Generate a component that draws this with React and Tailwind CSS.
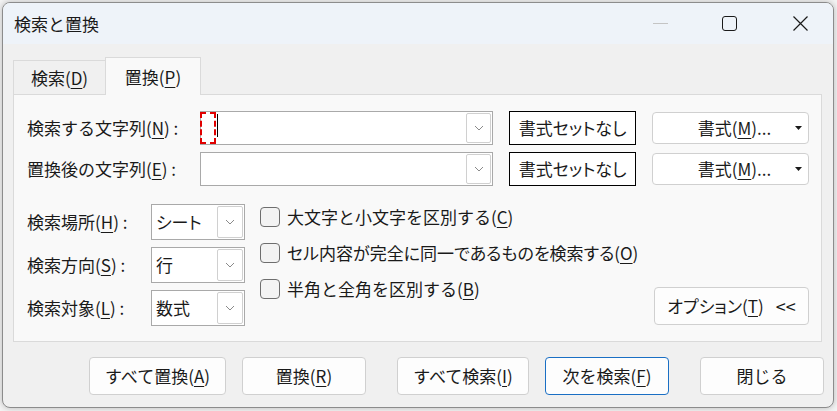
import React from "react";

const font = "font-['Noto_Sans_CJK_JP',sans-serif]";
const palt = "[font-feature-settings:'palt']";

const Key = ({ k }) => (
  <>
    (<u className="underline underline-offset-[3px] decoration-1">{k}</u>)
  </>
);

const Chevron = () => (
  <svg width="10" height="6" viewBox="0 0 10 6" fill="none">
    <path d="M1 1l4 4 4-4" stroke="#8a8a8a" strokeWidth="1" />
  </svg>
);

const Combo = ({ focus }) => (
  <div className="relative flex h-[34px] w-[293px] items-stretch border border-[#a9a9a9] bg-white">
    {focus && (
      <>
        <div className="ml-[-1px] h-[32px] w-[16px] border-2 border-dashed border-[#e00000]" />
        <div className="ml-[1px] mt-[2px] h-[23px] w-[1px] bg-black" />
      </>
    )}
    <div className="ml-auto mr-[1px] my-[1px] flex w-[25px] items-center justify-center rounded-[2px] border border-[#d0d0d0] bg-white">
      <Chevron />
    </div>
  </div>
);

const Select = ({ value }) => (
  <div className="flex h-[36px] w-[94px] items-stretch border border-[#a9a9a9] bg-white">
    <span className={"flex flex-1 items-center pl-[4px] text-[17px] text-[#1a1a1a] " + palt}>{value}</span>
    <div className="mr-[1px] my-[1px] flex w-[26px] items-center justify-center rounded-[2px] border border-[#d0d0d0] bg-white">
      <Chevron />
    </div>
  </div>
);

const Btn = ({ w, children, primary }) => (
  <button
    className={
      "flex h-[38px] items-center justify-center rounded-[4px] border bg-[#fdfdfd] text-[17px] text-[#1a1a1a] " +
      (primary ? "border-[#1a6fc4]" : "border-[#d0d0d0]")
    }
    style={{ width: w }}
  >
    {children}
  </button>
);

const FormatRow = ({ label, focus }) => (
  <div className="flex h-[34px] items-center">
    <span className="w-[173px] text-[17px] text-[#1a1a1a]">{label}</span>
    <Combo focus={focus} />
    <div className={"ml-[16px] flex h-[34px] w-[127px] items-center justify-center border border-black bg-white text-[17px] text-[#1a1a1a] " + palt}>
      書式セットなし
    </div>
    <div className="relative ml-[16px] flex h-[32px] w-[157px] items-center justify-center rounded-[4px] border border-[#d0d0d0] bg-white text-[17px] text-[#1a1a1a]">
      <span className="ml-[8px]">
        書式<Key k="M" />...
      </span>
      <svg className="absolute right-[6px] top-[13px]" width="7" height="4" viewBox="0 0 7 4">
        <path d="M0 0h7L3.5 4z" fill="#1a1a1a" />
      </svg>
    </div>
  </div>
);

const Check = ({ children, tight }) => (
  <div className="flex h-[22px] items-center">
    <div className="h-[20px] w-[20px] rounded-[4px] border border-[#6e6e6e] bg-[#f3f3f3]" />
    <span className={"ml-[7px] text-[17px] text-[#1a1a1a] " + (tight ? palt : "")}>{children}</span>
  </div>
);

export default function App() {
  return (
    <div className={"h-[411px] w-[837px] overflow-hidden bg-[#f4f4f4] p-[2px] " + font}>
      <div className="flex h-[406px] w-[832px] flex-col overflow-hidden rounded-[8px] border border-[#8c8c8c] bg-[#f0f0f0] shadow-[0_0_6px_rgba(0,0,0,0.25)]">
        {/* title bar */}
        <div className="flex h-[41px] items-center bg-[#eef3f9]">
          <span className="pl-[11px] text-[17px] text-[#1a1a1a]">検索と置換</span>
          <div className="ml-auto flex items-center">
            <div className="h-[1px] w-[15px] bg-[#c4c4c4]" />
            <div className="ml-[54px] h-[15px] w-[15px] rounded-[3px] border-[1.5px] border-[#1a1a1a]" />
            <svg className="ml-[56px] mr-[25px]" width="15" height="15" viewBox="0 0 15 15">
              <path d="M0.5 0.5l14 14M14.5 0.5l-14 14" stroke="#1a1a1a" strokeWidth="1.2" />
            </svg>
          </div>
        </div>

        {/* body */}
        <div className="flex flex-1 flex-col pt-[13px]">
          {/* tabs */}
          <div className="flex items-end pl-[10px]">
            <div className="flex h-[34px] w-[92px] items-center justify-center border border-b-0 border-r-0 border-[#dadada] bg-[#f0f0f0] text-[17px] text-[#1a1a1a]">
              検索<Key k="D" />
            </div>
            <div className="relative z-10 mb-[-1px] flex h-[38px] w-[96px] items-center justify-center border border-b-0 border-[#dadada] bg-[#f9f9f9] text-[17px] text-[#1a1a1a]">
              置換<Key k="P" />
            </div>
          </div>

          {/* panel */}
          <div className="ml-[10px] h-[248px] w-[809px] border border-[#dadada] bg-[#f9f9f9] pl-[13px] pr-[12px] pt-[16px]">
            <FormatRow
              focus
              label={
                <>
                  検索する文字列<Key k="N" /> :
                </>
              }
            />
            <div className="mt-[7px]">
              <FormatRow
                label={
                  <>
                    置換後の文字列<Key k="E" /> :
                  </>
                }
              />
            </div>

            <div className="mt-[18px] flex">
              <div className="flex flex-col gap-[7px]">
                {[
                  ["検索場所", "H", "シート"],
                  ["検索方向", "S", "行"],
                  ["検索対象", "L", "数式"],
                ].map(([l, k, v]) => (
                  <div key={k} className="flex items-center">
                    <span className="w-[124px] text-[17px] text-[#1a1a1a]">
                      {l}
                      <Key k={k} /> :
                    </span>
                    <Select value={v} />
                  </div>
                ))}
              </div>

              <div className="ml-[15px] mt-[2px] flex flex-col gap-[14px]">
                <Check>
                  大文字と小文字を区別する<Key k="C" />
                </Check>
                <Check tight>
                  セル内容が完全に同一であるものを検索する<Key k="O" />
                </Check>
                <Check>
                  半角と全角を区別する<Key k="B" />
                </Check>
              </div>

              <div className="ml-auto mb-[1px] self-end">
                <Btn w={155}>
                  <span className={palt}>オプション</span>
                  <Key k="T" />
                  <span className="ml-[12px] text-[18px]">&lt;&lt;</span>
                </Btn>
              </div>
            </div>
          </div>

          {/* buttons */}
          <div className="mt-[15px] flex justify-end pr-[9px]">
            <Btn w={137}>
              すべて置換<Key k="A" />
            </Btn>
            <div className="ml-[16px]">
              <Btn w={124}>
                置換<Key k="R" />
              </Btn>
            </div>
            <div className="ml-[31px]">
              <Btn w={132}>
                すべて検索<Key k="I" />
              </Btn>
            </div>
            <div className="ml-[16px]">
              <Btn w={124} primary>
                次を検索<Key k="F" />
              </Btn>
            </div>
            <div className="ml-[31px]">
              <Btn w={124}>閉じる</Btn>
            </div>
          </div>
        </div>
      </div>
    </div>
  );
}
